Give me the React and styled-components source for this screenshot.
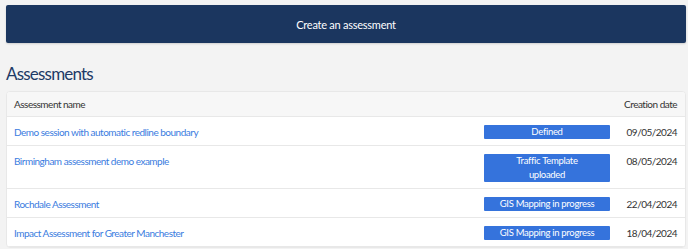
import React from "react";
import styled, { createGlobalStyle } from "styled-components";

const assessments = [
  { name: "Demo session with automatic redline boundary", status: "Defined", date: "09/05/2024" },
  { name: "Birmingham assessment demo example", status: "Traffic Template\nuploaded", date: "08/05/2024" },
  { name: "Rochdale Assessment", status: "GIS Mapping in progress", date: "22/04/2024" },
  { name: "Impact Assessment for Greater Manchester", status: "GIS Mapping in progress", date: "18/04/2024" },
];

const App = () => (
  <Main>
    <GlobalStyle />
    <CreateButton>Create an assessment</CreateButton>
    <Title>Assessments</Title>
    <Table>
      <HeaderRow>
        <NameCell>Assessment name</NameCell>
        <div />
        <DateCell>Creation date</DateCell>
      </HeaderRow>
      {assessments.map((item) => (
        <Row key={item.name}>
          <NameCell>
            <Link href="#">{item.name}</Link>
          </NameCell>
          <Badge>{item.status}</Badge>
          <DateCell>{item.date}</DateCell>
        </Row>
      ))}
    </Table>
  </Main>
);

const GlobalStyle = createGlobalStyle`
  body {
    margin: 0;
    background: #f3f3f3;
    font-family: "Lato", "Noto Sans", sans-serif;
    color: #333;
  }
`;

const Main = styled.main`
  padding: 5px 2px 0 6px;
`;

const CreateButton = styled.button`
  display: block;
  width: 100%;
  height: 38px;
  border: none;
  border-radius: 2px;
  background: #1b365f;
  color: #fff;
  font-family: inherit;
  font-size: 11px;
  letter-spacing: -0.25px;
  box-shadow: 0 1px 2px rgba(0, 0, 0, 0.15);
`;

const Title = styled.h1`
  margin: 21px 0 7px;
  font-size: 17px;
  font-weight: 400;
  letter-spacing: -0.8px;
  color: #1d3a66;
  line-height: 20px;
`;

const Table = styled.div`
  border: 1px solid #e8e8e8;
  border-radius: 4px;
  background: #fff;
  overflow: hidden;
  font-size: 10px;
  letter-spacing: -0.5px;
`;

const Row = styled.div`
  display: grid;
  grid-template-columns: 1fr 126px 75px;
  align-items: start;
  padding: 8px 0 6px;
  border-bottom: 1px solid #e8e8e8;
  line-height: 14px;
`;

const HeaderRow = styled(Row)`
  padding: 5px 0 5px;
  background: #f7f7f7;
  align-items: center;
`;

const NameCell = styled.div`
  padding-left: 7px;
`;

const DateCell = styled.div`
  text-align: right;
  padding-right: 8px;
`;

const Link = styled.a`
  color: #3a7ce0;
  text-decoration: none;
`;

const Badge = styled.div`
  background: #3573dc;
  color: #fff;
  text-align: center;
  font-size: 9.5px;
  letter-spacing: -0.3px;
  line-height: 14px;
  padding: 0 12px;
  border-radius: 1px;
  white-space: pre-line;
`;

export default App;
